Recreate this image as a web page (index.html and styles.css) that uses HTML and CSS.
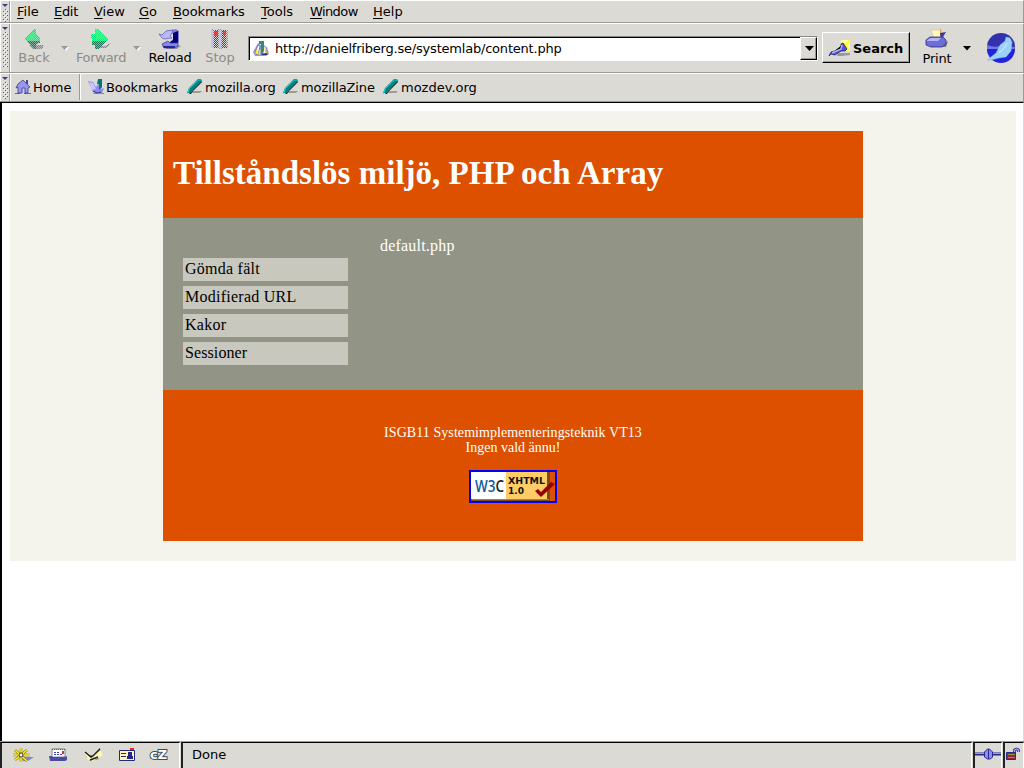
FILE: index.html
```html
<!DOCTYPE html>
<html lang="sv">
<head>
<meta charset="utf-8">
<title>Tillståndslös miljö, PHP och Array</title>
<link rel="stylesheet" href="styles.css">
</head>
<body>
<svg class="defs" width="0" height="0">
  <defs>
    <linearGradient id="w3c" gradientUnits="userSpaceOnUse" x1="0" y1="0" x2="50" y2="0"><stop offset=".52" stop-color="#0a5aa0"/><stop offset=".52" stop-color="#222"/></linearGradient>
    <pattern id="dither" width="2" height="2" patternUnits="userSpaceOnUse"><path fill="#dcdad5" d="M0 0h1v1H0zM1 1h1v1H1z"/></pattern>
    <pattern id="dots" width="4" height="4" patternUnits="userSpaceOnUse"><path fill="#5a5a96" d="M0 0h1v1H0zM2 2h1v1H2z"/><path fill="#fff" d="M1 1h1v1H1zM3 3h1v1H3z"/></pattern>
    <symbol id="bookmark" viewBox="0 0 16 16"><path fill="#999" d="M5 12h10l-2 2H5z"/><path fill="#111" d="M2 15L14 2l1 1L5 13l-1 2z"/><path fill="#008080" d="M0 14l2-5L11 0h3l1 2L5 12l-2 2z"/><path fill="none" stroke="#00e0e0" d="M.5 14.500l2-5 9-8.500H14"/></symbol>
  </defs>
</svg>
<div class="browser">
  <div class="bar menubar">
    <div class="grip"><svg width="9" height="22"><path fill="#3c3c82" d="M1 3h6L4 6z"/><rect x="2" y="8" width="5" height="13" fill="url(#dots)"/></svg></div>
    <nav class="menus">
      <span class="m-file"><u>F</u>ile</span><span class="m-edit"><u>E</u>dit</span><span class="m-view"><u>V</u>iew</span><span class="m-go"><u>G</u>o</span><span class="m-book"><u>B</u>ookmarks</span><span class="m-tools"><u>T</u>ools</span><span class="m-window"><u>W</u>indow</span><span class="m-help"><u>H</u>elp</span>
    </nav>
  </div>
  <div class="bar toolbar">
    <div class="grip"><svg width="9" height="48"><path fill="#3c3c82" d="M1 3h6L4 6z"/><rect x="2" y="8" width="5" height="35" fill="url(#dots)"/></svg></div>
    <div class="tool off t-back">
      <svg width="22" height="22" shape-rendering="crispEdges"><path fill="#888" d="M5 16h16l-2 4H10z"/><path fill="#00f078" d="M1 10L11 0h2v5l4 4v3H3z"/><path fill="#1e6e5a" d="M3 12h14v2l-4 1v5h-2z"/><path fill="url(#dither)" opacity=".6" d="M0 0h22v22H0z"/><path fill="#3cf582" opacity=".75" d="M2 10l9-9v9z"/></svg>
      <span>Back</span>
    </div>
    <svg class="arrow" width="8" height="5"><path fill="#fff" d="M1 1h7L5 5z"/><path fill="#999" d="M0 0h7L3.500 4z"/></svg>
    <div class="tool off t-forward">
      <svg width="22" height="22" shape-rendering="crispEdges"><path fill="#888" d="M7 17h8l6-3-4 5H9z"/><path fill="#00f078" d="M1 5h4V0h3l10 10v2H2z"/><path fill="#1e6e5a" d="M2 12h15L8 20H5v-4H2z"/><path fill="url(#dither)" opacity=".6" d="M0 0h22v22H0z"/><path fill="#3cf582" opacity=".75" d="M6 1l9 9H6z"/></svg>
      <span>Forward</span>
    </div>
    <svg class="arrow second" width="8" height="5"><path fill="#fff" d="M1 1h7L5 5z"/><path fill="#999" d="M0 0h7L3.500 4z"/></svg>
    <div class="tool t-reload">
      <svg width="22" height="22"><path fill="#999" d="M6 18l13-2 3 1-4 3H8z"/><path fill="#8282dc" d="M7 2l10-2 3 2v12H10l4-4V5z"/><path fill="#000078" d="M14 4l5-2v11l-2 2h-5l-1-2 3-2z"/><path fill="#b9b9fa" stroke="#5a5ab4" stroke-width=".7" d="M0 5l3 1 4-4 7-1-1 3-2 3 2 2-8 1-2-1z"/><path fill="#8787e6" stroke="#323296" stroke-width=".7" d="M3 15l6-3 2 2h8v3l-4 2H5z"/><path fill="#2323a0" d="M4 17h12v2H5z"/></svg>
      <span>Reload</span>
    </div>
    <div class="tool off t-stop">
      <svg width="22" height="22" shape-rendering="crispEdges"><path fill="#444" d="M2 1h17v18H2z"/><path fill="#8080f5" d="M2 0h3v19H2zM9 0h4v20H9zM17 1h2v17h-2z"/><path fill="url(#dither)" d="M0 0h22v22H0z"/><path fill="#ff2828" opacity=".75" d="M5 2h4v5H5zM14 2h3v4h-3z"/><path fill="#c8c8fa" opacity=".75" d="M2 1h2v18H2zM10 1h2v18h-2z"/></svg>
      <span>Stop</span>
    </div>
    <div class="address">
      <svg width="16" height="16"><path fill="#9696eb" d="M0 11L5 2l4 3 5 1 2 7-3 2H2z"/><path fill="#fff" stroke="#444496" stroke-width=".6" d="M2 12l3-8 2 1-2 9zM10 5h2l2 7-4 2z"/><path stroke="#f5e61e" stroke-width="1.500" d="M4 9l-1 4M7 9l-1 5M12 6l1 6"/><path fill="#2a9266" d="M6 0h5v10l-3 3V3H6z"/><path fill="#32328c" d="M8 13l5-1 2 2h-6z"/></svg>
      <span class="url">http://danielfriberg.se/systemlab/content.php</span>
      <div class="drop"><svg width="9" height="5"><path d="M0 0h9L4.500 5z"/></svg></div>
    </div>
    <div class="search">
      <svg width="22" height="18"><path fill="#ffffaa" d="M12 1h9v11h-9z"/><path stroke="#ffff28" stroke-width="2" d="M13 3l7 8M21 1l-5 5"/><path fill="#999" d="M9 14h12v2l-8 1H8z"/><path fill="#5555c8" stroke="#1e1e78" stroke-width=".8" d="M0 17l2-4 4-1 6-4V5l2-1 4 6-2 2-4 0-6 4-4-1z"/><path stroke="#b4b4ff" stroke-width="1.500" d="M3 14l9-4 1-4"/></svg>
      <span>Search</span>
    </div>
    <div class="tool t-print">
      <svg width="24" height="22"><path fill="#777" d="M9 16h9l5-4-2 6h-9z"/><path fill="#fffab4" stroke="#bbb" stroke-width=".6" d="M6 1h10l2 9H9z"/><path stroke="#ff9c2a" d="M15.500 0v7"/><path fill="#3c3ca0" d="M15 4l6-1-3 5 3 4-5 1z"/><path fill="#6e6ed7" stroke="#2c2c86" stroke-width=".8" d="M1 11l4-3h13l3 3v4l-4 3H6l-5-2z"/><path fill="#b4b4fa" d="M2 11l4-2h10l-3 3H2z"/></svg>
      <span>Print</span>
    </div>
    <svg class="arrow black" width="8" height="5"><path d="M0 0h8L4 4.500z"/></svg>
    <svg class="throbber" width="30" height="30"><circle cx="15" cy="15" r="14" fill="#3232af"/><path fill="#6e78e6" d="M1 13q7 3 13 1l15 1-1 3H1z"/><path fill="#2323dc" d="M1 17h28a14 14 0 0 1-28 0z"/><path fill="#9cd2fa" stroke="#70b4eb" stroke-width=".5" d="M1 28l9-7 4-8 5-4 1-4 4 1 2 4-1 9-5 6-7 1-8 2z"/><path fill="none" stroke="#d2f0ff" d="M13 21q6-4 8-10"/></svg>
  </div>
  <div class="bar bookmarks">
    <div class="grip"><svg width="9" height="28"><path fill="#3c3c82" d="M1 3h6L4 6z"/><rect x="2" y="8" width="5" height="17" fill="url(#dots)"/></svg></div>
    <div class="bm b-home"><svg width="16" height="16"><path fill="#228c78" d="M0 14h5v1H0zM9 14h7v1H9z"/><path fill="#c8c8fa" d="M3 7h10v7H3z"/><path fill="#9696eb" stroke="#3c3c96" stroke-width=".8" d="M1 9l2-4 5-4 7 7-2 1v5h-3V9H7v5H3V8z"/><path fill="#46469b" d="M11 1h2v4h-2z"/></svg><span>Home</span></div>
    <div class="bm b-book"><svg width="16" height="16"><path fill="#888" d="M5 14h11v1H6z"/><path fill="#8c8cf0" d="M0 2l5 1 3 5 3-4 3 1-1 5 3-1-2 5-4 1-5-2z"/><path fill="#c8c8ff" d="M1 3l4 1 3 6-4 1z"/><path fill="#00786e" d="M10 0h4v8l-3 3V5H9z"/><path stroke="#32328c" fill="none" d="M5 12l4 2 4-1"/></svg><span>Bookmarks</span></div>
    <div class="bm b-org"><svg width="16" height="16"><use href="#bookmark"/></svg><span>mozilla.org</span></div>
    <div class="bm b-zine"><svg width="16" height="16"><use href="#bookmark"/></svg><span>mozillaZine</span></div>
    <div class="bm b-dev"><svg width="16" height="16"><use href="#bookmark"/></svg><span>mozdev.org</span></div>
  </div>
  <main class="viewport">
    <div class="page">
      <div class="wrapper">
        <header><h1>Tillståndslös miljö, PHP och Array</h1></header>
        <section class="middle">
          <ul class="side"><li class="i1">Gömda fält</li><li class="i2">Modifierad URL</li><li class="i3">Kakor</li><li class="i4">Sessioner</li></ul>
          <p class="text">default.php</p>
        </section>
        <footer>
          <p><span class="f1">ISGB11 Systemimplementeringsteknik VT13</span><span class="f2">Ingen vald ännu!</span></p>
          <svg class="badge" width="88" height="33">
            <path fill="#7c4c18" d="M2 2h79v29H2z"/><path fill="#fff" d="M2 2h35v27H2z"/><path fill="#ffcc66" d="M37 2h41v27H37z"/><path fill="#888" d="M3 29h77v1H3z"/>
            <text x="6" y="22" textLength="29" lengthAdjust="spacingAndGlyphs" class="w3">W3C</text>
            <text x="39" y="14" textLength="37" lengthAdjust="spacingAndGlyphs" class="x">XHTML</text>
            <text x="39" y="24" textLength="16" lengthAdjust="spacingAndGlyphs" class="x">1.0</text>
            <path fill="#900" d="M66 21l3-2 3 3 10-10 4 2-14 13z"/>
            <path fill="none" stroke="#00f" stroke-width="2" d="M1 1h86v31H1z"/>
          </svg>
        </footer>
      </div>
    </div>
  </main>
  <div class="status">
    <div class="cell components">
      <svg width="22" height="14"><path fill="#8282dc" d="M10 9h12l-6 4h-5z"/><path stroke="#8a7800" stroke-width="2.500" d="M9 0v14M1 7h17M3 2l12 11M15 2L3 12"/><path stroke="#ffed32" stroke-width="1.500" d="M9 0v14M1 7h17M3 2l12 11M15 2L3 12"/><circle cx="9" cy="7" r="2" fill="#fff" stroke="#333"/></svg>
      <svg width="20" height="14"><path fill="#fff" stroke="#555" stroke-width=".7" d="M4 1h13v8H4z"/><path stroke="#e61e46" stroke-dasharray="1 1" d="M4 1.500h13"/><path stroke="#3c3cc8" stroke-dasharray="2 1" d="M6 4.500h6M6 6.500h8"/><path fill="#d22850" d="M14 3h2v3h-2z"/><path fill="#4b4ba5" d="M1 8h3v1h13l2-1v4l-2 1H2z"/></svg>
      <svg width="20" height="14"><path fill="#5a5ab4" d="M2 8l4 5 9-2-5-4z"/><path fill="#fff8aa" d="M1 5l6 4 9-7 3 5-10 6-5-1z"/><path stroke="#222" stroke-width="1.500" fill="none" d="M1 4l6 5 2-1 7-7M6 12l8-3"/><path stroke="#1e8282" d="M10 6l6-6"/></svg>
      <svg width="18" height="14"><path fill="#fff8b4" stroke="#28287d" d="M1.500 2.500h15v10h-15z"/><path fill="#dc2828" d="M12 0h4v2h-4z"/><path fill="#28287d" d="M3 5h5v1H3zM3 8h5v1H3zM10 4h4v4h-4zM9 8h6v3H9z"/></svg>
      <svg width="18" height="14"><text x="0" y="11" textLength="17" lengthAdjust="spacingAndGlyphs" class="cz">cZ</text></svg>
    </div>
    <div class="cell done">Done</div>
    <div class="cell plug"><svg width="26" height="14"><path stroke="#28288c" stroke-width="3" d="M0 7h26"/><path stroke="#9696ff" d="M0 6.500h26"/><path fill="#8c8cf5" stroke="#28288c" d="M9.500 5l3-3h2l3 3v5l-2 2h-3l-3-2z"/><path stroke="#28288c" d="M13.500 2v10"/></svg></div>
    <div class="cell lock"><svg width="16" height="14"><path fill="none" stroke="#4646a0" stroke-width="3" d="M9.500 6V3q2-2 4 0v2"/><path fill="none" stroke="#b4b4ff" d="M9.500 6V3q2-2 4 0v2"/><path fill="#8c2846" stroke="#28288c" d="M1.500 5.500h9v7h-9z"/><path stroke="#96962d" d="M3 7.500h7M3 10.500h7"/></svg></div>
  </div>
</div>
</body>
</html>
```
FILE: styles.css
```css
* { box-sizing: border-box; }
body { margin: 0; width: 1024px; height: 768px; overflow: hidden; background: #dcdad5; font: 13px/16px "DejaVu Sans", sans-serif; color: #000; }
svg { display: block; flex: none; overflow: visible; }
.defs { position: absolute; }
.browser { display: flex; flex-direction: column; height: 768px; }
.bar { display: flex; flex: none; border-top: 1px solid #fff; border-bottom: 1px solid #9c9a94; border-right: 1px solid #9c9a94; white-space: nowrap; }
.grip { width: 11px; flex: none; border-right: 1px solid #fff; border-left: 1px solid #fff; box-shadow: inset -1px 0 #9c9a94; }
.menubar { height: 23px; }
.menus { display: flex; padding: 3px 0 0 6px; }
.menus u { text-underline-offset: 2px; text-decoration-thickness: 1px; }
.m-file { width: 37px; } .m-edit { width: 40px; } .m-view { width: 45px; } .m-go { width: 34px; }
.m-book { width: 88px; letter-spacing: -.1px; } .m-tools { width: 49px; } .m-window { width: 63px; letter-spacing: -.6px; } .m-edit { letter-spacing: -.3px; }
.m-window { letter-spacing: -.7px; letter-spacing: -.75px; }
.m-window { letter-spacing: -.6px; }
.toolbar { height: 50px; }
.tool { display: flex; flex-direction: column; align-items: center; flex: none; padding-top: 5px; }
.tool span { margin-top: -1px; }
.off { color: #8c8a86; }
.t-back { width: 46px; } .t-forward { width: 64px; margin-right: 2px; letter-spacing: -.3px; } .t-reload { width: 56px; letter-spacing: -.2px; } .t-stop { width: 44px; }
.arrow { margin: 22px 0 0 4px; }
.second { margin-left: -2px; }
.toolbar > .t-reload { margin-left: 1px; }
.address { display: flex; align-items: center; flex: none; width: 570px; height: 25px; margin: 12px 0 0 6px; background: #fff; border: 1px solid #8a8884; border-right-color: #fff; border-bottom-color: #fff; box-shadow: inset 1px 1px #000; padding-left: 4px; }
.url { margin-left: 6px; flex: 1; letter-spacing: -.205px; }
.drop { width: 17px; height: 23px; padding: 8px 0 0 4px; background: #dcdad5; border: 1px solid #fff; border-right-color: #000; border-bottom-color: #000; box-shadow: inset -1px -1px #9c9a94; }
.search { display: flex; align-items: center; flex: none; width: 88px; height: 31px; margin: 8px 0 0 4px; padding-left: 6px; font-weight: bold; border: 1px solid #fff; border-right-color: #000; border-bottom-color: #000; box-shadow: inset -1px -1px #9c9a94; }
.search span { margin: 2px 0 0 2px; }
.t-print { width: 36px; margin-left: 9px; }
.t-print span { margin-top: 0; letter-spacing: -.2px; }
.black { margin-left: 8px; }
.throbber { margin: 8px 0 0 15px; }
.bookmarks { height: 29px; }
.bm { display: flex; align-items: center; flex: none; height: 26px; }
.bm span { margin: 2px 0 0 2px; }
.b-home { width: 69px; padding-left: 4px; border-right: 1px solid #9c9a94; box-shadow: 1px 0 #fff; }
.b-book { width: 107px; padding-left: 8px; letter-spacing: -.1px; } .b-org { width: 96px; letter-spacing: -.1px; } .b-zine { width: 100px; letter-spacing: -.1px; }
.viewport { height: 639px; flex: none; background: #fff; border-left: 2px solid #000; border-top: 1px solid #000; border-right: 1px solid #dcdad5; padding: 8px 7px 0 8px; }
.page { width: 1006px; height: 450px; padding: 20px 153px; background: #f4f4ec; font-family: "Liberation Serif", serif; }
.wrapper { width: 700px; color: #fff; }
header { height: 87px; padding: 24px 0 0 10px; background: #dc5000; }
h1 { margin: 0; font-size: 33px; line-height: 37px; white-space: nowrap; letter-spacing: .01px; }
.middle { display: flex; height: 172px; background: #929486; font-size: 16px; }
.side { width: 165px; margin: 40px 0 0 20px; padding: 0; list-style: none; color: #000; display: flex; flex-direction: column; gap: 5px; }
.side li { height: 23px; padding: 1px 0 0 2px; background: #c8c8be; line-height: 20px; letter-spacing: .25px; }
.side .i4 { letter-spacing: .1px; }
.text { margin: 18px 0 0 32px; line-height: 20px; letter-spacing: .2px; }
footer { height: 151px; padding-top: 35px; background: #dc5000; display: flex; flex-direction: column; align-items: center; }
footer p { display: flex; flex-direction: column; align-items: center; margin: 0; font-size: 14px; line-height: 15px; white-space: nowrap; }
.f1 { letter-spacing: .07px; }
.badge { margin-top: 15px; }
.w3 { fill: url(#w3c); font: 600 17px "Open Sans", sans-serif; }
.x { fill: #111; font: bold 9px "DejaVu Sans", sans-serif; }
.cz { fill: #fff; stroke: #3c4b5a; stroke-width: 2px; paint-order: stroke; font: bold 13px "DejaVu Sans", sans-serif; }
.status { display: flex; height: 27px; border-top: 1px solid #9c9a94; }
.cell { flex: none; border: solid #fff; border-width: 1px 1px 0 2px; border-top-color: #000; border-left-color: #222; margin-right: 1px; height: 26px; padding-top: 4px; }
.components { width: 180px; display: flex; gap: 14px; padding: 5px 0 0 10px; }
.components svg:nth-child(3) { margin-left: 2px; }
.done { width: 791px; padding: 4px 0 0 9px; }
.plug { width: 29px; }
.lock { width: 21px; }
```
